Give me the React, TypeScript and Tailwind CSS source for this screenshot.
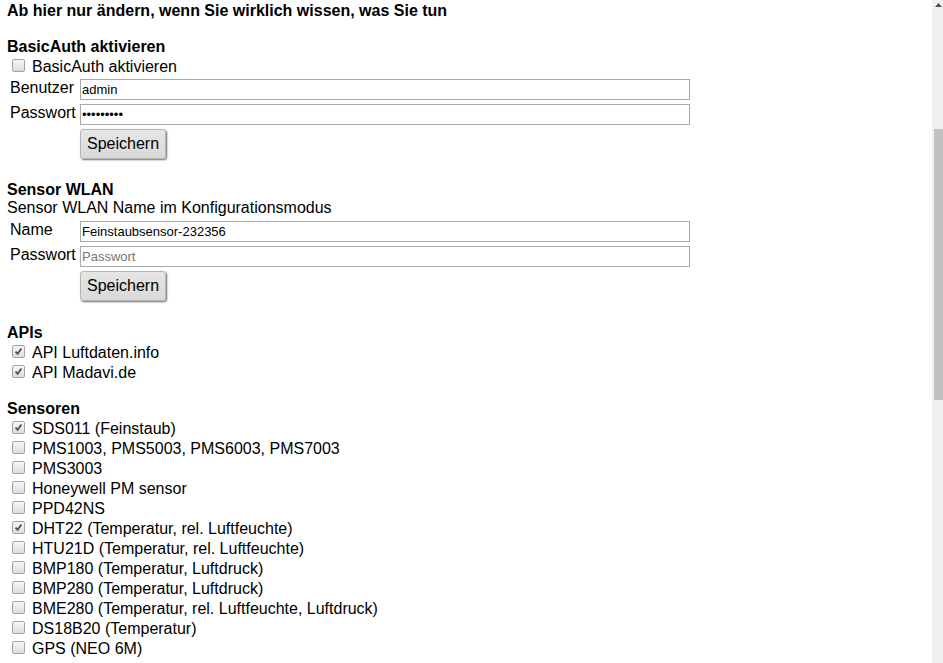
import React from 'react';

const sensors: [string, boolean][] = [
  ['SDS011 (Feinstaub)', true],
  ['PMS1003, PMS5003, PMS6003, PMS7003', false],
  ['PMS3003', false],
  ['Honeywell PM sensor', false],
  ['PPD42NS', false],
  ['DHT22 (Temperatur, rel. Luftfeuchte)', true],
  ['HTU21D (Temperatur, rel. Luftfeuchte)', false],
  ['BMP180 (Temperatur, Luftdruck)', false],
  ['BMP280 (Temperatur, Luftdruck)', false],
  ['BME280 (Temperatur, rel. Luftfeuchte, Luftdruck)', false],
  ['DS18B20 (Temperatur)', false],
  ['GPS (NEO 6M)', false],
];

function CheckRow({ label, checked }: { label: string; checked?: boolean }) {
  return (
    <label className="flex h-[20px] items-start">
      <span className="mt-[2px] ml-[5px] mr-[7px] flex h-[13px] w-[13px] shrink-0 items-center justify-center rounded-[2px] border border-[#a3a3a3] bg-linear-to-b from-[#f8f8f8] to-[#dcdcdc]">
        {checked && (
          <svg width="9" height="9" viewBox="0 0 9 9">
            <path d="M1.6 4.6 L3.6 6.8 L7.4 1.6" fill="none" stroke="#4d4d4d" strokeWidth="1.7" />
          </svg>
        )}
      </span>
      <span className="leading-[20px] whitespace-nowrap">{label}</span>
    </label>
  );
}

function FieldRow({ label, children }: { label?: string; children: React.ReactNode }) {
  return (
    <div className="flex items-start">
      <span className="w-[73px] shrink-0 pl-[3px] leading-[18px]">{label}</span>
      {children}
    </div>
  );
}

function TextInput(props: React.InputHTMLAttributes<HTMLInputElement>) {
  return (
    <input
      readOnly
      {...props}
      className="h-[21px] w-[610px] border border-[#a9a9a9] bg-white px-[1px] text-[13px] text-black outline-none placeholder:text-[#757575]"
    />
  );
}

function SaveButton() {
  return (
    <button className="h-[30px] rounded-[3px] border border-[#b5b5b5] bg-linear-to-b from-[#e6e6e6] to-[#d9d9d9] px-[6px] text-[16px] leading-[18px] text-black shadow-[1px_1px_2px_#6f6f6f]">
      Speichern
    </button>
  );
}

export default function App() {
  return (
    <div
      className="flex h-[663px] w-[943px] overflow-hidden bg-white text-[16px] text-black"
      style={{ fontFamily: '"Liberation Sans", Arial, sans-serif' }}
    >
      <main className="flex-1 pl-[7px] pt-[2px]">
        <div className="font-bold leading-[18px]">Ab hier nur ändern, wenn Sie wirklich wissen, was Sie tun</div>

        {/* BasicAuth */}
        <div className="mt-[18px] font-bold leading-[18px]">BasicAuth aktivieren</div>
        <div className="mt-[1px]">
          <CheckRow label="BasicAuth aktivieren" />
        </div>
        <div className="mt-[2px] flex flex-col gap-[4px]">
          <FieldRow label="Benutzer">
            <TextInput type="text" defaultValue="admin" />
          </FieldRow>
          <FieldRow label="Passwort">
            <TextInput type="password" defaultValue="feinstaub" />
          </FieldRow>
          <FieldRow>
            <SaveButton />
          </FieldRow>
        </div>

        {/* Sensor WLAN */}
        <div className="mt-[22px] font-bold leading-[18px]">Sensor WLAN</div>
        <div className="leading-[18px]">Sensor WLAN Name im Konfigurationsmodus</div>
        <div className="mt-[4px] flex flex-col gap-[4px]">
          <FieldRow label="Name">
            <TextInput type="text" defaultValue="Feinstaubsensor-232356" />
          </FieldRow>
          <FieldRow label="Passwort">
            <TextInput type="password" placeholder="Passwort" />
          </FieldRow>
          <FieldRow>
            <SaveButton />
          </FieldRow>
        </div>

        {/* APIs */}
        <div className="mt-[23px] font-bold leading-[18px]">APIs</div>
        <div className="mt-[1px]">
          <CheckRow label="API Luftdaten.info" checked />
          <CheckRow label="API Madavi.de" checked />
        </div>

        {/* Sensoren */}
        <div className="mt-[17px] font-bold leading-[18px]">Sensoren</div>
        <div className="mt-[1px]">
          {sensors.map(([name, on]) => (
            <CheckRow key={name} label={name} checked={on} />
          ))}
        </div>
      </main>

      {/* scrollbar */}
      <div className="flex w-[11px] shrink-0 flex-col bg-[#f0f0f0]">
        <div className="flex h-[10px] justify-center pt-[3px] pl-[2px]">
          <svg width="7" height="4" viewBox="0 0 7 4">
            <path d="M3.5 0 L7 4 L0 4 Z" fill="#505050" />
          </svg>
        </div>
        <div className="ml-[2px] mt-[119px] h-[271px] bg-[#c1c1c1]" />
      </div>
    </div>
  );
}
